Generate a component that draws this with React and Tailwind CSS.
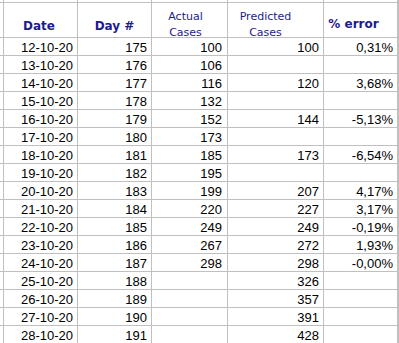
import React from "react";

const rows = [
  ["12-10-20", "175", "100", "100", "0,31%"],
  ["13-10-20", "176", "106", "", ""],
  ["14-10-20", "177", "116", "120", "3,68%"],
  ["15-10-20", "178", "132", "", ""],
  ["16-10-20", "179", "152", "144", "-5,13%"],
  ["17-10-20", "180", "173", "", ""],
  ["18-10-20", "181", "185", "173", "-6,54%"],
  ["19-10-20", "182", "195", "", ""],
  ["20-10-20", "183", "199", "207", "4,17%"],
  ["21-10-20", "184", "220", "227", "3,17%"],
  ["22-10-20", "185", "249", "249", "-0,19%"],
  ["23-10-20", "186", "267", "272", "1,93%"],
  ["24-10-20", "187", "298", "298", "-0,00%"],
  ["25-10-20", "188", "", "326", ""],
  ["26-10-20", "189", "", "357", ""],
  ["27-10-20", "190", "", "391", ""],
  ["28-10-20", "191", "", "428", ""],
];

const gridRow = "grid grid-cols-[4px_74px_74px_76px_96px_74px_1fr]";
const cell = "border-r border-b border-[#c0c0c0]";
const boldHead = "font-['DejaVu_Sans',sans-serif] font-bold text-[12px] leading-[15px] text-[#1c1c8c]";
const smallHead = "font-['DejaVu_Sans',sans-serif] text-[11px] leading-[16px] text-[#1c1c8c]";
const dataCell = `${cell} h-[18px] pt-[1px] text-right leading-[17px] text-[13px] text-black`;

export default function App() {
  return (
    <div className="w-[399px] h-[343px] overflow-hidden bg-white font-['Liberation_Sans',Arial,sans-serif]">
      {/* row above the header, mostly cut off */}
      <div className={gridRow}>
        {Array.from({ length: 7 }).map((_, i) => (
          <div key={i} className={`${cell} h-[3px]`} />
        ))}
      </div>

      {/* header */}
      <div className={gridRow}>
        <div className={`${cell} h-[35px]`} />
        <div className={`${cell} h-[35px] pt-[16px] pr-[3px] text-center ${boldHead}`}>Date</div>
        <div className={`${cell} h-[35px] pt-[16px] text-center ${boldHead}`}>Day #</div>
        <div className={`${cell} h-[35px] pt-[6px] pr-[8px] text-center ${smallHead}`}>
          <div>Actual</div>
          <div>Cases</div>
        </div>
        <div className={`${cell} h-[35px] pt-[6px] pr-[20px] text-center ${smallHead}`}>
          <div>Predicted</div>
          <div>Cases</div>
        </div>
        <div className={`${cell} h-[35px] pt-[14px] pr-[14px] text-center ${boldHead}`}>% error</div>
        <div className={`${cell} h-[35px]`} />
      </div>

      {/* data */}
      {rows.map((r) => (
        <div key={r[0]} className={gridRow}>
          <div className={`${cell} h-[18px]`} />
          <div className={`${dataCell} pr-[4px]`}>{r[0]}</div>
          <div className={`${dataCell} pr-[4px]`}>{r[1]}</div>
          <div className={`${dataCell} pr-[5px]`}>{r[2]}</div>
          <div className={`${dataCell} pr-[4px]`}>{r[3]}</div>
          <div className={`${dataCell} pr-[4px]`}>{r[4]}</div>
          <div className={`${cell} h-[18px]`} />
        </div>
      ))}
    </div>
  );
}
